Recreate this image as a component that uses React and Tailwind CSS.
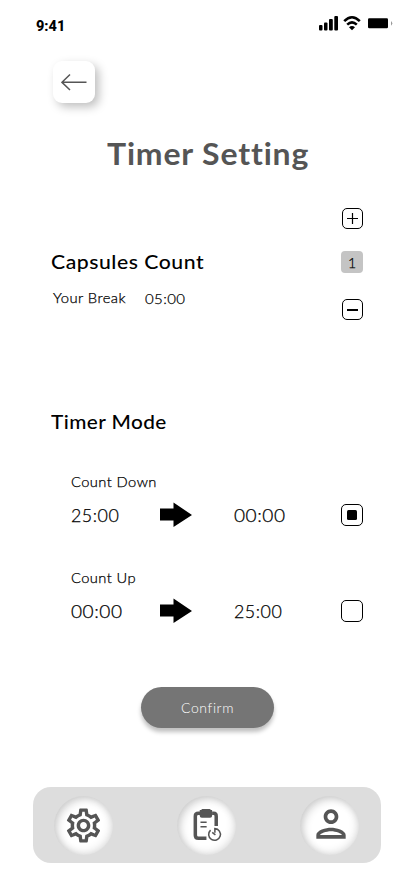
import { MdOutlineSettings, MdOutlinePerson } from "react-icons/md";

function StatusBar() {
  return (
    <div className="flex h-[50px] shrink-0 items-start justify-between pl-9 pr-[21px]">
      <span className="mt-[17px] font-['Roboto'] text-[14.5px] font-extrabold leading-5">9:41</span>
      <svg className="mt-[15px]" width="74" height="17" viewBox="0 0 74 17">
        <rect x="0" y="10" width="3.5" height="5.5" rx="1" />
        <rect x="5" y="7.5" width="3.5" height="8" rx="1" />
        <rect x="10" y="4" width="3.8" height="11.5" rx="1" />
        <rect x="15.3" y="1" width="3.7" height="14.5" rx="1" />
        <g fill="none" stroke="#000" strokeWidth="2.5">
          <path d="M25.2 6.2 Q33 -1.8 40.8 6.2" />
          <path d="M28.2 9.7 Q33 5 37.8 9.7" />
        </g>
        <path d="M30 12.2 Q33 10 36 12.2 L33 15.3Z" />
        <rect x="49" y="3.3" width="20" height="10" rx="1.2" />
        <path d="M72 6 Q74.5 8.3 72 10.7Z" fill="#999" />
      </svg>
    </div>
  );
}

function BigArrow() {
  return (
    <svg width="32" height="26" viewBox="0 0 32 26">
      <path d="M0 6.5H13.5V.5L32 13L13.5 25V18.5H0Z" />
    </svg>
  );
}

function Wide({ className, children }) {
  return (
    <span className={`inline-block origin-left whitespace-nowrap font-light [-webkit-text-stroke:0.25px] ${className}`}>
      {children}
    </span>
  );
}

function ModeRow({ label, from, to, checked }) {
  const wide = { "00:00": "scale-x-[1.09]", "25:00": "scale-x-[1.02]" };
  return (
    <div className="h-24 pl-[71px] pr-[51px]">
      <div className="h-[22px] text-[14px] leading-[22px]">
        <Wide className="scale-x-[1.05] tracking-[0.4px]">{label}</Wide>
      </div>
      <div className="mt-[9px] flex h-[26px] items-center text-[17.5px] leading-[26px]">
        <div className="w-[89px] pt-px">
          <Wide className={`tracking-[0.5px] ${wide[from]}`}>{from}</Wide>
        </div>
        <BigArrow />
        <div className="ml-[42px] w-[107px] pt-px">
          <Wide className={`tracking-[0.5px] ${wide[to]}`}>{to}</Wide>
        </div>
        <span className="flex size-[22px] shrink-0 items-center justify-center rounded-[5px] border border-black">
          {checked && <span className="size-[10px] rounded-[1.5px] bg-black" />}
        </span>
      </div>
    </div>
  );
}

function ClipboardTimer() {
  return (
    <svg className="ml-[4px] mt-px" width="31" height="35" viewBox="0 0 30 34" fill="none" stroke="#555">
      <path d="M7 5.2H5.2Q2.2 5.2 2.2 8V26.5Q2.2 29.5 5.2 29.5H13M18.5 5.2H20Q22.5 5.2 22.5 8V17.5" strokeWidth="3.4" />
      <path d="M9 1H16Q16.8 1 17.3 2H18.5V7.5Q18.5 9.5 16.5 9.5H8.5Q6.5 9.5 6.5 7.5V2H8Q8.3 1 9 1Z" fill="#555" stroke="none" />
      <path d="M7.2 13.8H13.2M7.2 18.2H13.2" strokeWidth="1.3" />
      <path d="M17 21.5A5.7 5.7 0 1 0 21.2 20V24" strokeWidth="1.5" />
      <path d="M18.6 23.7L21.7 26" strokeWidth="1.5" />
    </svg>
  );
}

function NavButton({ children }) {
  return (
    <div className="flex size-[59px] items-center justify-center rounded-full bg-white text-[#555] shadow-[inset_3px_3px_9px_rgba(0,0,0,0.18),inset_-2px_-2px_8px_rgba(0,0,0,0.1)]">
      {children}
    </div>
  );
}

export default function App() {
  return (
    <div className="flex h-[896px] w-[414px] flex-col overflow-hidden bg-white font-['Lato',sans-serif] text-black">
      <StatusBar />
      <button className="ml-[53px] mt-[11px] flex size-[42px] shrink-0 items-center justify-center rounded-[9px] bg-white shadow-[4px_4px_10px_rgba(0,0,0,0.25)]">
        <svg width="26" height="18" viewBox="0 0 26 18" fill="none" stroke="#555" strokeWidth="1.5">
          <path d="M25.5 9.3H1M9 1.5L1 9.3L9 17" />
        </svg>
      </button>
      <h1 className="ml-[107px] mt-[30px] h-10 w-max origin-left scale-x-[1.065] whitespace-nowrap text-[30px] font-bold leading-10 tracking-[0.8px] text-[#555]">
        Timer Setting
      </h1>
      <section className="mt-[35px] flex h-[114px] justify-between pl-[51px] pr-[51px]">
        <div className="pt-10">
          <h2 className="h-[26px] w-max origin-left scale-x-[1.06] whitespace-nowrap text-[20px] font-medium leading-[26px] tracking-[0.5px]">Capsules Count</h2>
          <div className="mt-[14px] flex pl-[2px] text-[14px] leading-5">
            <div className="w-[92px]">
              <Wide className="scale-x-[1.06] tracking-[0.4px]">Your Break</Wide>
            </div>
            <div className="pt-px">
              <Wide className="scale-x-[1.07] tracking-[0.4px]">05:00</Wide>
            </div>
          </div>
        </div>
        <div className="flex flex-col items-end">
          <button className="flex size-[21px] items-center justify-center rounded-[5px] border border-black">
            <svg width="11" height="11" viewBox="0 0 11 11" stroke="#000" strokeWidth="1.2">
              <path d="M0 5.5H11M5.5 0V11" />
            </svg>
          </button>
          <span className="mt-[22px] flex h-[22px] w-[22px] items-center justify-center rounded bg-[#c4c4c4] pt-[2px] text-[14px] font-light leading-5 [-webkit-text-stroke:0.25px]">1</span>
          <button className="mt-[26px] flex size-[21px] items-center justify-center rounded-[5px] border border-black">
            <span className="h-[2px] w-[11px] bg-black" />
          </button>
        </div>
      </section>
      <h2 className="ml-[51px] mt-[86px] h-[26px] w-max origin-left scale-x-[1.04] whitespace-nowrap text-[20px] font-medium leading-[26px] tracking-[0.4px]">Timer Mode</h2>
      <section className="mt-[37px]">
        <ModeRow label="Count Down" from="25:00" to="00:00" checked />
        <ModeRow label="Count Up" from="00:00" to="25:00" />
      </section>
      <button className="ml-[141px] mt-[24px] flex h-[41px] w-[133px] shrink-0 items-center justify-center rounded-full bg-[#757575] text-[14px] font-light tracking-[0.6px] text-white shadow-[0_4px_4px_rgba(0,0,0,0.25)]">
        Confirm
      </button>
      <nav className="ml-[33px] mt-[59px] flex h-[76px] w-[348px] shrink-0 items-center justify-between rounded-[18px] bg-[#ddd] pl-[21px] pr-[22px]">
        <NavButton><MdOutlineSettings size={41} className="mt-px" /></NavButton>
        <NavButton><ClipboardTimer /></NavButton>
        <NavButton><MdOutlinePerson size={44} className="ml-[2px] mb-[2px]" /></NavButton>
      </nav>
    </div>
  );
}
